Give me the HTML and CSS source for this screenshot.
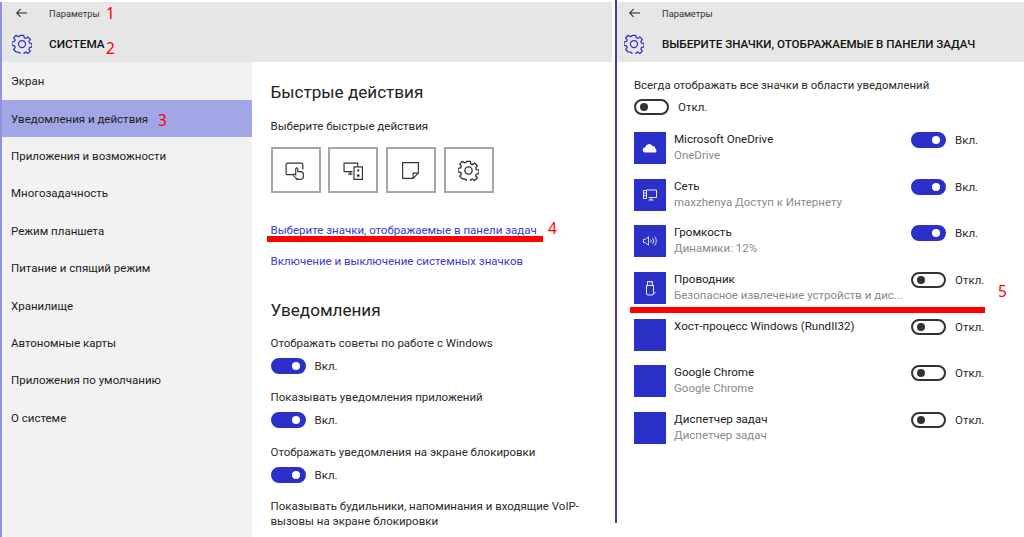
FILE: index.html
```html
<!DOCTYPE html>
<html lang="ru">
<head>
<meta charset="utf-8">
<title>Параметры</title>
<link rel="stylesheet" href="styles.css">
</head>
<body>
<svg class="defs" width="0" height="0" aria-hidden="true">
  <defs>
    <symbol id="gear" viewBox="0 0 24 24">
      <path fill="none" stroke="currentColor" stroke-width="1.500" stroke-linejoin="round" d="M9.900 1.500h4.200l.5 3 1.900.8 2.500-1.800 3 3-1.800 2.500.8 1.900 3 .5v4.200l-3 .5-.8 1.900 1.800 2.500-3 3-2.500-1.800-1.900.8-.5 3H9.900l-.5-3-1.900-.8L5 21.600l-3-3 1.800-2.500-.8-1.900-3-.5V9.500l3-.5.800-1.900L2 4.500l3-3 2.500 1.800 1.900-.8z"/>
      <circle cx="12" cy="12" r="4.200" fill="none" stroke="currentColor" stroke-width="1.500"/>
    </symbol>
  </defs>
</svg>

<section class="window window-left">
  <header class="titlebar">
    <div class="crumb">
      <svg class="back" viewBox="0 0 12 10"><path d="M5 .7.8 5 5 9.300M.8 5H12" fill="none" stroke="currentColor" stroke-width="1.100"/></svg>
      <span class="crumb-text">Параметры</span>
    </div>
    <div class="heading">
      <svg class="head-gear"><use href="#gear"/></svg>
      <h1 class="system-title">СИСТЕМА</h1>
    </div>
  </header>
  <div class="columns">
    <nav class="sidebar">
      <a class="nav-item">Экран</a>
      <a class="nav-item nav-active">Уведомления и действия</a>
      <a class="nav-item">Приложения и возможности</a>
      <a class="nav-item">Многозадачность</a>
      <a class="nav-item">Режим планшета</a>
      <a class="nav-item">Питание и спящий режим</a>
      <a class="nav-item">Хранилище</a>
      <a class="nav-item">Автономные карты</a>
      <a class="nav-item">Приложения по умолчанию</a>
      <a class="nav-item">О системе</a>
    </nav>
    <main class="content">
      <h2 class="section-title">Быстрые действия</h2>
      <p class="text quick-label">Выберите быстрые действия</p>
      <div class="tiles">
        <div class="tile"><svg class="tile-icon" viewBox="0 0 20 20"><path d="M8 14H2.500a1.500 1.500 0 0 1-1.500-1.500v-8A1.500 1.500 0 0 1 2.500 3h13A1.500 1.500 0 0 1 17 4.500V9" fill="none" stroke="currentColor" stroke-width="1.100"/><path d="M11 17.500c-1.500-1-3-2.500-3-3.500s1.300-.8 2.200 0V8.500a1 1 0 0 1 2 0V11h2.500c1.500 0 2.800.8 2.800 2.500v2c0 1.500-1 3-3 3h-2.500c-1 0-1.500-.5-1.500-1z" fill="#fff" stroke="currentColor" stroke-width="1.100"/></svg></div>
        <div class="tile"><svg class="tile-icon" viewBox="0 0 20 20"><path d="M9 11H1V3h13v3M5 13.500h4M7 11v2.500" fill="none" stroke="currentColor" stroke-width="1.100"/><path d="M10.500 6.500h8v12h-8z" fill="none" stroke="currentColor" stroke-width="1.100"/><circle cx="14.500" cy="10" r="1.100" fill="currentColor"/><circle cx="14.500" cy="14.800" r="1.300" fill="currentColor"/></svg></div>
        <div class="tile"><svg class="tile-icon" viewBox="0 0 20 20"><path d="M2.500 2.500h15v10l-5 5h-10zM17.500 12.500h-5v5" fill="none" stroke="currentColor" stroke-width="1.100"/></svg></div>
        <div class="tile"><svg class="tile-icon tile-gear"><use href="#gear"/></svg></div>
      </div>
      <a class="link link-first">Выберите значки, отображаемые в панели задач</a>
      <a class="link link-second">Включение и выключение системных значков</a>
      <h2 class="section-title notif-title">Уведомления</h2>
      <div class="setting">
        <p class="text">Отображать советы по работе с Windows</p>
        <div class="switch-row"><span class="switch on"></span><span class="text">Вкл.</span></div>
      </div>
      <div class="setting">
        <p class="text">Показывать уведомления приложений</p>
        <div class="switch-row"><span class="switch on"></span><span class="text">Вкл.</span></div>
      </div>
      <div class="setting">
        <p class="text">Отображать уведомления на экране блокировки</p>
        <div class="switch-row"><span class="switch on"></span><span class="text">Вкл.</span></div>
      </div>
      <p class="text last-setting">Показывать будильники, напоминания и входящие VoIP-вызовы на экране блокировки</p>
    </main>
  </div>
</section>

<section class="window window-right">
  <header class="titlebar titlebar-right">
    <div class="crumb">
      <svg class="back" viewBox="0 0 12 10"><path d="M5 .7.8 5 5 9.300M.8 5H12" fill="none" stroke="currentColor" stroke-width="1.100"/></svg>
      <span class="crumb-text">Параметры</span>
    </div>
    <div class="heading">
      <svg class="head-gear"><use href="#gear"/></svg>
      <h1 class="page-title">ВЫБЕРИТЕ ЗНАЧКИ, ОТОБРАЖАЕМЫЕ В ПАНЕЛИ ЗАДАЧ</h1>
    </div>
  </header>
  <div class="panel">
    <p class="text always-label">Всегда отображать все значки в области уведомлений</p>
    <div class="switch-row always-row"><span class="switch"></span><span class="text">Откл.</span></div>
    <ul class="app-list">
      <li class="app">
        <span class="app-icon"><svg viewBox="0 0 16 16"><path d="M3.500 12.500a2.500 2.500 0 0 1-.4-5A4 4 0 0 1 10.500 6a3 3 0 0 1 3 3 2 2 0 0 1 0 3.500z" fill="#fff"/></svg></span>
        <div class="app-text"><span class="app-name">Microsoft OneDrive</span><span class="app-sub">OneDrive</span></div>
        <div class="app-switch"><span class="switch on"></span><span class="text">Вкл.</span></div>
      </li>
      <li class="app">
        <span class="app-icon"><svg viewBox="0 0 16 16"><path d="M4.500 3h10v7.500h-8M9 10.500V13M6.500 13h5M1.500 3.500h3v8h-3zM2 6h2M2 8.500h2" fill="none" stroke="#fff" stroke-width=".9"/></svg></span>
        <div class="app-text"><span class="app-name">Сеть</span><span class="app-sub">maxzhenya Доступ к Интернету</span></div>
        <div class="app-switch"><span class="switch on"></span><span class="text">Вкл.</span></div>
      </li>
      <li class="app">
        <span class="app-icon"><svg viewBox="0 0 16 16"><path d="M1.500 6.300h2l3-2.600v8.600l-3-2.600h-2zM8.500 6.500a2 2 0 0 1 0 3M10.500 5a4.500 4.500 0 0 1 0 6M12.500 3.500a6.500 6.500 0 0 1 0 9" fill="none" stroke="#fff" stroke-width=".8"/></svg></span>
        <div class="app-text"><span class="app-name">Громкость</span><span class="app-sub">Динамики: 12%</span></div>
        <div class="app-switch"><span class="switch on"></span><span class="text">Вкл.</span></div>
      </li>
      <li class="app">
        <span class="app-icon"><svg viewBox="0 0 16 16"><path d="M5.500 1.500h5v4h1v8a1.500 1.500 0 0 1-1.500 1.500H6a1.500 1.500 0 0 1-1.500-1.500v-8h1zM4.500 5.500h7M7 3h.8M8.800 3h.8M11.500 14l2-1.500" fill="none" stroke="#fff" stroke-width=".9"/></svg></span>
        <div class="app-text"><span class="app-name">Проводник</span><span class="app-sub">Безопасное извлечение устройств и дис...</span></div>
        <div class="app-switch"><span class="switch"></span><span class="text">Откл.</span></div>
      </li>
      <li class="app">
        <span class="app-icon"></span>
        <div class="app-text"><span class="app-name">Хост-процесс Windows (RundII32)</span></div>
        <div class="app-switch"><span class="switch"></span><span class="text">Откл.</span></div>
      </li>
      <li class="app">
        <span class="app-icon"></span>
        <div class="app-text"><span class="app-name">Google Chrome</span><span class="app-sub">Google Chrome</span></div>
        <div class="app-switch"><span class="switch"></span><span class="text">Откл.</span></div>
      </li>
      <li class="app">
        <span class="app-icon"></span>
        <div class="app-text"><span class="app-name">Диспетчер задач</span><span class="app-sub">Диспетчер задач</span></div>
        <div class="app-switch"><span class="switch"></span><span class="text">Откл.</span></div>
      </li>
    </ul>
  </div>
</section>

<span class="mark num-1">1</span>
<span class="mark num-2">2</span>
<span class="mark num-3">3</span>
<span class="mark num-4">4</span>
<span class="mark num-5">5</span>
<span class="red-line line-4"></span>
<span class="red-line line-5"></span>
</body>
</html>
```
FILE: styles.css
```css
* { box-sizing: border-box; }
html, body { margin: 0; height: 537px; overflow: hidden; background: #fff; }
body {
  position: relative;
  display: flex;
  width: 1024px;
  font-family: Roboto, "Noto Sans", sans-serif;
  font-size: 12px;
  color: #2a2a2a;
}
.defs { position: absolute; }
p, h1, h2, ul { margin: 0; padding: 0; }

.window { display: flex; flex-direction: column; }
.window-left { width: 612px; margin-top: 2px; border-left: 2px solid #8e92e4; }
.window-right {
  width: 409px;
  height: 523px;
  margin-left: 3px;
  border-left: 2px solid #3f4296;
  padding-top: 2px;
}

.titlebar { height: 60px; background: #e6e6e6; flex: none; }
.crumb { display: flex; align-items: center; height: 22px; padding-left: 14px; }
.back { width: 11px; height: 10px; color: #222; flex: none; }
.crumb-text { margin-left: 22px; font-size: 9.300px; color: #333; }
.heading { display: flex; align-items: center; height: 32px; margin-top: 4px; padding-left: 10px; }
.head-gear { width: 20px; height: 20px; color: #2a30c8; flex: none; }
.system-title { margin-left: 17px; font-size: 11.800px; font-weight: 500; color: #111; }
.page-title { margin-left: 18px; font-size: 11.600px; font-weight: 500; color: #111; white-space: nowrap; }

.titlebar-right .crumb { padding-left: 12px; }
.titlebar-right .crumb-text { margin-left: 22px; }
.titlebar-right .heading { padding-left: 7px; }

.columns { display: flex; flex: 1; min-height: 0; }
.sidebar { width: 250px; background: #f2f2f2; flex: none; padding-top: 0.500px; }
.nav-item {
  display: flex;
  align-items: center;
  height: 37.400px;
  padding-left: 9px;
  font-size: 11.500px;
  color: #222;
}
.nav-active { background: #a1a6e6; }

.content { padding: 18px 0 0 18.500px; flex: 1; min-width: 0; }
.section-title { font-size: 17.100px; font-weight: 400; color: #222; line-height: 25px; }
.text { font-size: 11.500px; line-height: 16px; color: #2a2a2a; }
.quick-label { margin-top: 13px; }
.tiles { display: flex; gap: 7.700px; margin-top: 13px; }
.tile {
  width: 50px;
  height: 46px;
  border: 2px solid #a6a6a6;
  display: flex;
  align-items: center;
  justify-content: center;
}
.tile-icon { width: 21px; height: 21px; color: #333; }
.link { display: block; font-size: 11.500px; line-height: 16px; color: #3a3ad0; }
.link-first { margin-top: 29px; }
.link-second { margin-top: 14.500px; }
.notif-title { margin-top: 29.500px; }

.notif-title + .setting { margin-top: 11.500px; }
.setting + .setting { margin-top: 15.500px; }
.switch-row { display: flex; align-items: center; gap: 9px; margin-top: 7px; height: 16px; }
.last-setting { margin-top: 16px; width: 325px; line-height: 15px; }

.switch {
  position: relative;
  display: block;
  width: 35px;
  height: 16px;
  border-radius: 8px;
  border: 2px solid #333;
  background: #fff;
  flex: none;
}
.switch::after {
  content: "";
  position: absolute;
  left: 4px;
  top: 2px;
  width: 8px;
  height: 8px;
  border-radius: 50%;
  background: #333;
}
.switch.on { background: #2a30c8; border-color: #2a30c8; }
.switch.on::after { left: auto; right: 4px; background: #fff; }

.panel { padding: 15px 0 0 17px; flex: 1; }
.always-label { font-size: 11.400px; }
.always-row { margin-top: 6px; }
.app-list { list-style: none; margin-top: 17px; }
.app { display: flex; height: 46.700px; }
.app-icon {
  width: 32px;
  height: 32px;
  background: #2a30c8;
  display: flex;
  align-items: center;
  justify-content: center;
  flex: none;
}
.app-icon svg { width: 16px; height: 16px; }
.app-text { width: 237px; margin-left: 8px; display: flex; flex-direction: column; flex: none; white-space: nowrap; }
.app-name { font-size: 11.600px; line-height: 15px; color: #222; }
.app-sub { font-size: 11.500px; line-height: 16px; color: #8a8a8a; }
.app-switch { display: flex; align-items: flex-start; gap: 9px; }

.mark { position: absolute; color: #f00; font-family: "Noto Sans", sans-serif; font-size: 15.500px; line-height: 16px; }
.num-1 { left: 106px; top: 5px; }
.num-2 { left: 106px; top: 40px; }
.num-3 { left: 158px; top: 112px; }
.num-4 { left: 548px; top: 220px; }
.num-5 { left: 998px; top: 283px; }
.red-line { position: absolute; background: #f00; }
.line-4 { left: 267px; top: 236px; width: 276px; height: 6px; }
.line-5 { left: 630px; top: 307px; width: 355px; height: 6px; }
```
